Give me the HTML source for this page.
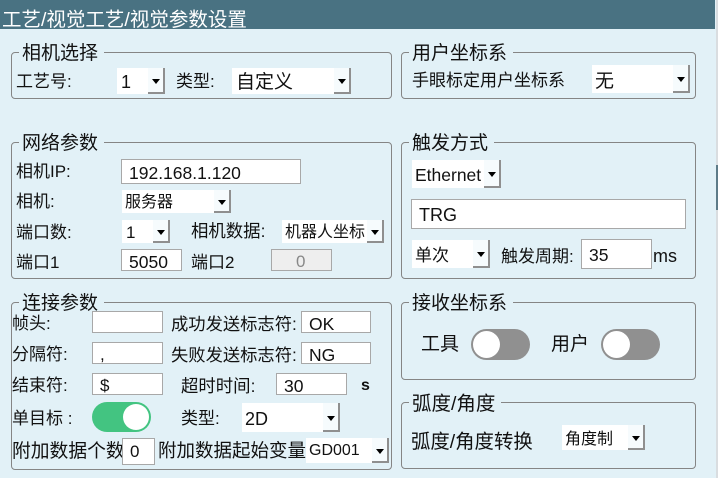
<!DOCTYPE html>
<html lang="zh">
<head>
<meta charset="utf-8">
<title>视觉参数设置</title>
<style>
html,body{margin:0;padding:0}
body{position:relative;width:718px;height:478px;overflow:hidden;background:#e2f1f7;font-family:"Liberation Sans","Noto Sans CJK SC",sans-serif;color:#111}
.hd{position:absolute;left:0;top:0;width:715px;height:29px;background:#497282}
.sb{position:absolute;left:716px;top:0;width:2px;height:478px;background:#d9dde0}
.th{position:absolute;left:716px;top:165px;width:2px;height:45px;background:#5d7b88}
.g{position:absolute;box-sizing:border-box;border:1px solid #858585;border-radius:4px}
.gt{position:absolute;height:22px;background:#e2f1f7}
.t{position:absolute;white-space:nowrap;height:24px;line-height:24px;margin-top:1px}
.i{position:absolute;box-sizing:border-box;background:#fff;border:1px solid #a8a8a8}
.s{position:absolute;background:#fff}
.s:after{content:"";position:absolute;right:0;top:0;bottom:0;width:15px;background:#f6fbfd;border-right:2px solid #8f8f8f;border-bottom:2px solid #8f8f8f}
.s:before{content:"";position:absolute;z-index:1;right:5px;top:50%;margin-top:-2px;width:0;height:0;border-left:4.5px solid transparent;border-right:4.5px solid transparent;border-top:5px solid #000}
.sw{position:absolute;box-sizing:border-box;width:59px;height:31px;border-radius:16px;background:#909090}
.sw i{position:absolute;top:2px;width:27px;height:27px;border-radius:50%;background:#fff}
</style>
</head>
<body>
<div class="hd"></div>
<div class="sb"></div><div class="th"></div>
<div class="t" style="left:2px;top:7px;font-size:19.5px;color:#fff">工艺/视觉工艺/视觉参数设置</div>

<div class="g" style="left:11px;top:52px;width:381px;height:47px"></div>
<div class="gt" style="left:19px;top:42px;width:85px"></div>
<div class="t" style="left:22px;top:41px;font-size:19px">相机选择</div>
<div class="t" style="left:16px;top:69px;font-size:17px">工艺号:</div>
<div class="s" style="left:117px;top:68px;width:48px;height:26px"></div>
<div class="t" style="left:121px;top:69px;font-size:18px">1</div>
<div class="t" style="left:176px;top:69px;font-size:17px">类型:</div>
<div class="s" style="left:232px;top:68px;width:119px;height:26px"></div>
<div class="t" style="left:236px;top:70px;font-size:19px">自定义</div>

<div class="g" style="left:401px;top:52px;width:295px;height:47px"></div>
<div class="gt" style="left:409px;top:42px;width:104px"></div>
<div class="t" style="left:412px;top:41px;font-size:19px">用户坐标系</div>
<div class="t" style="left:412px;top:68px;font-size:17px">手眼标定用户坐标系</div>
<div class="s" style="left:592px;top:65px;width:98px;height:28px"></div>
<div class="t" style="left:595px;top:69px;font-size:19px">无</div>

<div class="g" style="left:11px;top:142px;width:381px;height:137px"></div>
<div class="gt" style="left:19px;top:132px;width:85px"></div>
<div class="t" style="left:22px;top:131px;font-size:19px">网络参数</div>
<div class="t" style="left:16px;top:159px;font-size:17px">相机IP:</div>
<div class="i" style="left:121px;top:159px;width:180px;height:25px"></div>
<div class="t" style="left:129px;top:160px;font-size:17.5px">192.168.1.120</div>
<div class="t" style="left:16px;top:189px;font-size:17px">相机:</div>
<div class="s" style="left:122px;top:190px;width:109px;height:23px"></div>
<div class="t" style="left:125px;top:190px;font-size:16px">服务器</div>
<div class="t" style="left:16px;top:220px;font-size:17px">端口数:</div>
<div class="s" style="left:122px;top:220px;width:48px;height:23px"></div>
<div class="t" style="left:126px;top:220px;font-size:17px">1</div>
<div class="t" style="left:191px;top:218px;font-size:17.4px">相机数据:</div>
<div class="s" style="left:282px;top:220px;width:102px;height:23px"></div>
<div class="t" style="left:285px;top:220px;font-size:16px">机器人坐标</div>
<div class="t" style="left:16px;top:250px;font-size:17px">端口1</div>
<div class="i" style="left:121px;top:249px;width:61px;height:22px"></div>
<div class="t" style="left:129px;top:249px;font-size:17.5px">5050</div>
<div class="t" style="left:191px;top:250px;font-size:17px">端口2</div>
<div class="i" style="left:271px;top:249px;width:61px;height:22px;background:#eeeeee"></div>
<div class="t" style="left:296px;top:249px;font-size:17px;color:#888">0</div>

<div class="g" style="left:11px;top:302px;width:381px;height:168px"></div>
<div class="gt" style="left:19px;top:292px;width:85px"></div>
<div class="t" style="left:22px;top:291px;font-size:19px">连接参数</div>
<div class="t" style="left:12px;top:311px;font-size:17px">帧头:</div>
<div class="i" style="left:92px;top:311px;width:71px;height:22px"></div>
<div class="t" style="left:171px;top:311px;font-size:17.3px">成功发送标志符:</div>
<div class="i" style="left:301px;top:311px;width:70px;height:22px"></div>
<div class="t" style="left:309px;top:311px;font-size:17.5px">OK</div>
<div class="t" style="left:12px;top:342px;font-size:17px">分隔符:</div>
<div class="i" style="left:92px;top:342px;width:71px;height:22px"></div>
<div class="t" style="left:100px;top:342px;font-size:17px">,</div>
<div class="t" style="left:171px;top:342px;font-size:17.3px">失败发送标志符:</div>
<div class="i" style="left:301px;top:342px;width:70px;height:22px"></div>
<div class="t" style="left:309px;top:342px;font-size:17.5px">NG</div>
<div class="t" style="left:12px;top:373px;font-size:17px">结束符:</div>
<div class="i" style="left:92px;top:373px;width:71px;height:22px"></div>
<div class="t" style="left:100px;top:373px;font-size:17px">$</div>
<div class="t" style="left:181px;top:373px;font-size:17.4px">超时时间:</div>
<div class="i" style="left:276px;top:373px;width:71px;height:22px"></div>
<div class="t" style="left:284px;top:373px;font-size:17.5px">30</div>
<div class="t" style="left:361px;top:373px;font-size:16px;font-weight:bold">s</div>
<div class="t" style="left:12px;top:406px;font-size:17px">单目标 :</div>
<div class="sw" style="left:92px;top:402px;width:59px;height:30px;background:#43c481"><i style="left:31px;top:2px;width:26px;height:26px"></i></div>
<div class="t" style="left:181px;top:406px;font-size:17px">类型:</div>
<div class="s" style="left:242px;top:403px;width:98px;height:29px"></div>
<div class="t" style="left:245px;top:406px;font-size:18px">2D</div>
<div class="t" style="left:12px;top:438px;width:110px;overflow:hidden;font-size:18.8px">附加数据个数</div>
<div class="i" style="left:122px;top:438px;width:33px;height:27px"></div>
<div class="t" style="left:130px;top:439px;font-size:17px">0</div>
<div class="t" style="left:158px;top:438px;font-size:18.5px">附加数据起始变量</div>
<div class="s" style="left:306px;top:438px;width:83px;height:25px"></div>
<div class="t" style="left:309px;top:438px;font-size:16px">GD001</div>

<div class="g" style="left:401px;top:142px;width:295px;height:137px"></div>
<div class="gt" style="left:409px;top:132px;width:85px"></div>
<div class="t" style="left:412px;top:131px;font-size:19px">触发方式</div>
<div class="s" style="left:412px;top:160px;width:89px;height:28px"></div>
<div class="t" style="left:415px;top:162px;font-size:17.5px">Ethernet</div>
<div class="i" style="left:411px;top:199px;width:275px;height:30px"></div>
<div class="t" style="left:419px;top:202px;font-size:18px">TRG</div>
<div class="s" style="left:412px;top:240px;width:78px;height:28px"></div>
<div class="t" style="left:415px;top:243px;font-size:17px">单次</div>
<div class="t" style="left:501px;top:244px;font-size:17px">触发周期:</div>
<div class="i" style="left:581px;top:239px;width:71px;height:30px"></div>
<div class="t" style="left:589px;top:242px;font-size:17.5px">35</div>
<div class="t" style="left:653px;top:243px;font-size:18px">ms</div>

<div class="g" style="left:401px;top:302px;width:295px;height:78px"></div>
<div class="gt" style="left:409px;top:292px;width:104px"></div>
<div class="t" style="left:412px;top:291px;font-size:19px">接收坐标系</div>
<div class="t" style="left:421px;top:332px;font-size:19px">工具</div>
<div class="sw" style="left:471px;top:329px"><i style="left:2px"></i></div>
<div class="t" style="left:551px;top:332px;font-size:19px">用户</div>
<div class="sw" style="left:601px;top:329px"><i style="left:2px"></i></div>

<div class="g" style="left:401px;top:402px;width:295px;height:67px"></div>
<div class="gt" style="left:409px;top:392px;width:92px"></div>
<div class="t" style="left:412px;top:391px;font-size:19.5px">弧度/角度</div>
<div class="t" style="left:411px;top:429px;font-size:19.4px">弧度/角度转换</div>
<div class="s" style="left:562px;top:425px;width:83px;height:25px"></div>
<div class="t" style="left:565px;top:427px;font-size:16px">角度制</div>
</body>
</html>
